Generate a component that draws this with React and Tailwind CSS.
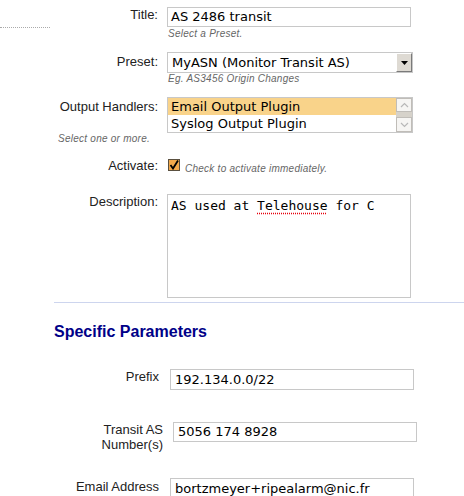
const sans = { fontFamily: '"Liberation Sans", Arial, sans-serif' };

function Hint({ children, className = '' }) {
  return (
    <div
      className={`text-[10px] leading-[12px] italic text-[#666] tracking-[0.25px] ${className}`}
      style={sans}
    >
      {children}
    </div>
  );
}

function Label({ children, w }) {
  return (
    <div className={`${w} shrink-0 text-right text-[13px] leading-[15px] text-[#222]`} style={sans}>
      {children}
    </div>
  );
}

function TextBox({ value, className = '' }) {
  return (
    <div
      className={`w-[244px] h-[20px] border border-[#c8c8c8] bg-white flex items-center px-[3px] text-[13px] text-black font-['DejaVu_Sans',sans-serif] whitespace-nowrap overflow-hidden ${className}`}
    >
      {value}
    </div>
  );
}

function Chevron({ up }) {
  return (
    <svg width="9" height="6" viewBox="0 0 9 6">
      <path
        d={up ? 'M1 5 L4.5 1.5 L8 5' : 'M1 1 L4.5 4.5 L8 1'}
        fill="none"
        stroke="#b8b8b8"
        strokeWidth="1.2"
      />
    </svg>
  );
}

export default function App() {
  return (
    <div className="w-[464px] h-[496px] bg-white overflow-hidden flex">
      <div className="w-[54px] shrink-0">
        <div className="mt-[27px] w-[50px] border-t border-dotted border-[#aaa]" />
      </div>

      <div className="flex-1 pt-[7px]">
        {/* Title */}
        <div className="flex">
          <Label w="w-[104px]">Title:</Label>
          <div className="ml-[9px]">
            <TextBox value="AS 2486 transit" />
            <Hint className="mt-[1px] ml-[1px]">Select a Preset.</Hint>
          </div>
        </div>

        {/* Preset */}
        <div className="flex mt-[12px]">
          <div className="pt-[2px]">
            <Label w="w-[104px]">Preset:</Label>
          </div>
          <div className="ml-[9px]">
            <div className="w-[246px] h-[21px] border border-[#c8c8c8] bg-white flex items-center">
              <div className="flex-1 pl-[4px] text-[13px] text-black font-['DejaVu_Sans',sans-serif] whitespace-nowrap">
                MyASN (Monitor Transit AS)
              </div>
              <div className="w-[16px] h-[19px] bg-[#dedad3] border-t border-l border-t-white border-l-white border-r border-b border-r-[#7a7a7a] border-b-[#7a7a7a] flex items-center justify-center">
                <svg width="7" height="4" viewBox="0 0 7 4">
                  <path d="M0 0 H7 L3.5 4 Z" fill="#000" />
                </svg>
              </div>
            </div>
            <Hint className="ml-[1px]">Eg. AS3456 Origin Changes</Hint>
          </div>
        </div>

        {/* Output handlers */}
        <div className="flex mt-[12px]">
          <div className="pt-[2px]">
            <Label w="w-[104px]">Output Handlers:</Label>
          </div>
          <div className="ml-[9px] w-[246px] h-[36px] border border-[#c8c8c8] bg-white flex">
            <div className="flex-1 text-[13px] text-black font-['DejaVu_Sans',sans-serif] leading-[17px]">
              <div className="bg-[#f9d38a] pl-[3px]">Email Output Plugin</div>
              <div className="pl-[3px]">Syslog Output Plugin</div>
            </div>
            <div className="w-[16px] bg-[#d6d2ca] flex flex-col justify-between">
              <div className="h-[14px] bg-[#f6f5f3] border border-[#c0bdb8] flex items-center justify-center">
                <Chevron up />
              </div>
              <div className="h-[15px] bg-[#f6f5f3] border border-[#c0bdb8] flex items-center justify-center">
                <Chevron />
              </div>
            </div>
          </div>
        </div>
        <Hint className="ml-[4px]">Select one or more.</Hint>

        {/* Activate */}
        <div className="flex mt-[13px]">
          <Label w="w-[104px]">Activate:</Label>
          <div className="ml-[10px] flex items-start">
            <div className="mt-[1px] w-[12px] h-[12px] bg-[#f2a94c] border border-[#5a5040] flex items-center justify-center">
              <svg width="10" height="10" viewBox="0 0 10 10">
                <path d="M1.5 5 L4 8.5 L9 0.5" fill="none" stroke="#000" strokeWidth="1.8" />
              </svg>
            </div>
            <Hint className="ml-[5px] mt-[5px]">Check to activate immediately.</Hint>
          </div>
        </div>

        {/* Description */}
        <div className="flex mt-[19px]">
          <Label w="w-[104px]">Description:</Label>
          <div className="ml-[9px] w-[244px] h-[104px] border border-[#c8c8c8] bg-white px-[3px] pt-[2px] text-[13px] leading-[17px] text-black font-['DejaVu_Sans_Mono',monospace] whitespace-pre">
            AS used at{' '}
            <span className="underline decoration-dotted decoration-red-600 underline-offset-[3px]">
              Telehouse
            </span>{' '}
            for C
          </div>
        </div>

        <div className="mt-[4px] border-t border-[#cdd5ee]" />

        <h2
          className="mt-[20px] text-[16px] leading-[18px] font-bold text-[#000088]"
          style={sans}
        >
          Specific Parameters
        </h2>

        {/* Prefix */}
        <div className="flex mt-[28px]">
          <Label w="w-[105px]">Prefix</Label>
          <TextBox value="192.134.0.0/22" className="ml-[11px] h-[21px] px-[4px]" />
        </div>

        {/* Transit AS */}
        <div className="flex mt-[32px]">
          <Label w="w-[109px]">
            Transit AS
            <br />
            Number(s)
          </Label>
          <TextBox value="5056 174 8928" className="ml-[10px] self-start px-[4px]" />
        </div>

        {/* Email */}
        <div className="flex mt-[26px]">
          <div className="pt-[1px]">
            <Label w="w-[105px]">Email Address</Label>
          </div>
          <TextBox value="bortzmeyer+ripealarm@nic.fr" className="ml-[11px] h-[21px] px-[4px]" />
        </div>
      </div>
    </div>
  );
}
